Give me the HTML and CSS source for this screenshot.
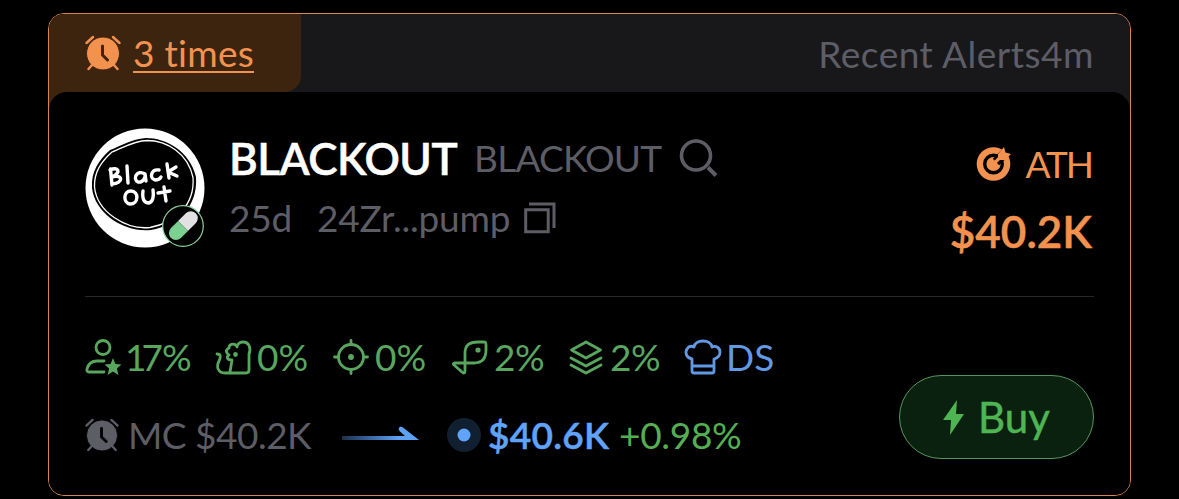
FILE: index.html
```html
<!DOCTYPE html>
<html lang="en">
<head>
<meta charset="utf-8">
<title>BLACKOUT alert</title>
<link rel="stylesheet" href="styles.css">
</head>
<body>
<svg class="defs" width="0" height="0">
  <symbol id="clock" viewBox="0 0 36 36">
    <circle cx="18" cy="18.500" r="16.500" fill="currentColor"/>
    <path d="M1.500 8 8 2M28 2l6.500 6M7 30l-3.500 4M29 30l3.500 4" fill="none" stroke="currentColor" stroke-width="2.400" stroke-linecap="round"/>
    <path class="hands" d="M17.500 11v9l5 5" fill="none" stroke-width="3" stroke-linecap="round" stroke-linejoin="round"/>
  </symbol>
</svg>
<main class="card">
  <header class="head">
    <div class="tab"><svg class="clock clock-alert"><use href="#clock"/></svg><span class="times">3 times</span></div>
    <span class="recent">Recent Alerts4m</span>
  </header>
  <div class="backing"><section class="body">
    <div class="token">
      <div class="avatar">
        <svg width="120" height="120" viewBox="0 0 120 120">
          <circle cx="60" cy="60" r="59.500" fill="#fff"/>
          <path d="M25 22C36 18 46 11 61 10c20 0 44 13 50 39 2 30-18 48-45 53C40 105 10 86 7 60 6 43 14 32 25 22Z" fill="#000"/>
          <path d="M27 24C38 20 48 13 62 12.500c20 0 41 13 46 37 2 27-17 45-43 50C41 102 12 84 9.500 59 9 44 16 34 27 24Z" fill="none" stroke="#fff" stroke-width="1.300"/>
          <g fill="none" stroke="#fff" stroke-width="3.400" stroke-linecap="round" stroke-linejoin="round">
            <path d="M25.500 41 27 57M25 42c8-4 12 2 2 7 11-3 12 6 0 7M42 38l1 17M60 46c-8-5-13 5-7 8 5 1 8-5 7-8l1 7M74 42c-8-1-10 8-4 10 3 0 5-1 6-3M82 36l2 14M91 39l-8 5 9 4"/>
            <path d="M46 63c-8 0-8 12-1 13 9 0 9-13 1-13M58 63c-1 8 1 12 6 12 4-1 5-7 4-13M79 59l2 14M73 65l12-2"/>
          </g>
        </svg>
        <svg class="pill" width="42" height="42" viewBox="0 0 42 42">
          <circle cx="21" cy="21" r="20.300" fill="#000" stroke="#8ed49d" stroke-width="1.200"/>
          <g transform="rotate(45 21 21)"><path d="M14 21V10a7 7 0 0 1 14 0v11Z" fill="#e1e1e3"/><path d="M14 21v10a7 7 0 0 0 14 0V21Z" fill="#7bd092"/></g>
        </svg>
      </div>
      <div class="info">
        <div class="names"><h1 class="symbol">BLACKOUT</h1><span class="fullname">BLACKOUT</span>
          <svg class="search" width="40" height="40" viewBox="0 0 40 40"><circle cx="17" cy="17.500" r="14.500" fill="none" stroke="currentColor" stroke-width="3.600"/><path d="m29 29.500 8 8" stroke="currentColor" stroke-width="4"/></svg></div>
        <div class="meta"><span class="age">25d</span><span class="address">24Zr...pump</span>
          <svg class="copy" width="32" height="32" viewBox="0 0 32 32" fill="none" stroke="currentColor" stroke-width="3"><path d="M1.700 7.800h22.500v22H1.700ZM5 2h25v24"/></svg></div>
      </div>
      <div class="ath">
        <div class="ath-label"><svg width="36" height="36" viewBox="0 0 36 36"><circle cx="17.500" cy="18" r="16.800" fill="currentColor"/><circle cx="17.500" cy="18" r="8.800" fill="none" stroke="#000" stroke-width="3.400"/><path d="m20 16 15-15" stroke="#000" stroke-width="9"/><path d="m17 18.500 10-10" stroke="currentColor" stroke-width="3.200" stroke-linecap="round"/><path d="M22 8l6-7 1.500 5.500L35 8l-6 6h-7Z" fill="currentColor"/></svg><span>ATH</span></div>
        <strong class="ath-value">$40.2K</strong>
      </div>
    </div>
    <div class="lower">
      <div>
        <div class="stats">
          <div class="stat s1"><svg viewBox="0 0 36 36"><circle cx="18" cy="8.500" r="7"/><path d="M19 22h-7c-6 0-9 4-10 8-.5 2 .5 3 2 3h15"/><path d="m28 19 2.400 6 6.100.5-4.600 4 1.500 6.500-5.400-3.400-5.400 3.400 1.500-6.500-4.600-4 6.100-.5Z" fill="currentColor" stroke="none"/></svg><span><i class="one">1</i>7%</span></div>
          <div class="stat s2"><svg viewBox="0 0 36 36"><path d="M2 15c4 0 4 3 2 7-3 6-1 12 6 12h21c2 0 3-1 3-3V15c2-4 1-12-6-12-4 0-6 3-6 5-1-4-8-4-8 1-4 2-3 5 0 7-3 2-2 5 3 5l-2 12"/><circle cx="20.500" cy="15.500" r="1" fill="currentColor"/></svg><span>0%</span></div>
          <div class="stat s3"><svg viewBox="0 0 36 36"><circle cx="18" cy="18" r="12.500"/><circle cx="18" cy="18" r="2.900" fill="currentColor" stroke="none"/><path d="M18 1.500v4M18 30.500v4M1.500 18h4M30.500 18h4"/></svg><span>0%</span></div>
          <div class="stat s4"><svg viewBox="0 0 36 36"><path d="M13 24V14C13 6 18 3 26 3h6c2 0 2 1 2 3v5c0 9-4 13-12 13H3c-2 0-2 1-1 2l8 7c2 2 3 1 3-2Z"/><circle cx="26" cy="11" r="2.600" fill="currentColor" stroke="none"/></svg><span>2%</span></div>
          <div class="stat s5"><svg viewBox="0 0 36 36"><path d="M18 3 32.500 11 18 19 3.500 11ZM3 19l15 8 15-8M3 26l15 8 15-8"/></svg><span>2%</span></div>
          <div class="stat s6"><svg viewBox="0 0 36 36"><path d="M7 32V20C1 19 0 13 2 10c2-3 5-3 7-2 1-8 17-8 18 0 4-2 8 1 8 5 0 4-2 6-6 7v12q0 2-2 2H9q-2 0-2-2M7 27h22"/></svg><span>DS</span></div>
        </div>
        <div class="market">
          <svg class="clock clock-mc"><use href="#clock"/></svg><span class="mc">MC $40.2K</span>
          <svg class="arrow" width="78" height="16" viewBox="0 0 78 16"><defs><linearGradient id="fade"><stop offset="0" stop-color="#1b304c"/><stop offset=".75" stop-color="#5ea2f7"/></linearGradient></defs><path d="M1 9h63l-5-4.500c-3-3 0-6 3-4L78 13H1Z" fill="url(#fade)"/></svg>
          <svg class="dot" width="34" height="34" viewBox="0 0 34 34"><circle cx="17" cy="17" r="17" fill="#112031"/><circle cx="17" cy="17" r="6.500" fill="#60a3fa"/></svg>
          <strong class="now">$40.6K</strong><span class="change">+0.98%</span>
        </div>
      </div>
      <button class="buy"><svg width="21" height="35" viewBox="0 0 21 35"><path d="M14 0 0 20h8L7 35 21 14h-8Z" fill="currentColor"/></svg><span>Buy</span></button>
    </div>
  </section></div>
</main>
</body>
</html>
```

FILE: styles.css
```css
* { box-sizing: border-box; }
body { margin: 0; padding: 13px 48px 3px; background: #000; height: 499px; overflow: hidden; font: 37px/44px Lato, "Open Sans", sans-serif; white-space: nowrap; font-variant-ligatures: none; }
svg { display: block; flex: none; overflow: visible; }
.defs { position: absolute; }
.card { width: 1083px; height: 483px; border: 1px solid #d98550; border-radius: 16px; overflow: hidden; background: #000; }
.head { height: 78px; display: flex; justify-content: space-between; background: #18181a; }
.tab { width: 252px; background: #3c240f; border-radius: 0 0 16px 0; color: #f3924f; display: flex; align-items: center; padding-left: 36px; gap: 12px; }
.clock { width: 36px; height: 36px; }
.clock-alert { stroke: #3c240f; }
.times { border-bottom: 2px solid; line-height: 36px; padding-top: 2px; margin-top: -1px; letter-spacing: .3px; }
.recent { color: #5d5d66; padding: 18px 36px 0 0; letter-spacing: .5px; }
.backing { background: linear-gradient(90deg, #3c240f 40px, #18181a 40px) top / 100% 20px no-repeat; }
.body { height: 403px; background: #000; border-radius: 18px 18px 0 0; padding: 0 36px; }
.token { height: 205px; padding-top: 36px; display: flex; border-bottom: 1px solid #27272a; }
.avatar { width: 120px; height: 120px; position: relative; }
.pill { position: absolute; left: 77px; top: 77px; }
.info { margin-left: 24px; color: #5d5d66; }
.names { display: flex; height: 60px; align-items: center; }
.symbol { margin: 0; color: #fff; font-size: 44px; font-weight: 600; line-height: 60px; letter-spacing: -.5px; -webkit-text-stroke: .5px; }
.fullname { margin-left: 17px; letter-spacing: -.8px; }
.search { margin-left: 18px; }
.meta { display: flex; height: 60px; align-items: center; letter-spacing: -.2px; }
.address { margin-left: 25px; }
.copy { margin-left: 14px; }
.ath { margin-left: auto; color: #f3924f; display: flex; flex-direction: column; align-items: flex-end; padding-right: 2px; }
.ath-label { height: 72px; display: flex; align-items: center; gap: 13px; letter-spacing: -2px; }
.ath-value { font-size: 44px; font-weight: 600; line-height: 62px; -webkit-text-stroke: .5px; }
.lower { display: flex; justify-content: space-between; }
.stats { display: flex; padding-top: 38px; color: #59a65e; }
.stat { display: flex; align-items: center; gap: 6px; height: 44px; }
.stat svg { width: 36px; height: 36px; fill: none; stroke: currentColor; stroke-width: 2.8; stroke-linejoin: round; stroke-linecap: round; }
.s1 { width: 130px; } .s2 { width: 118px; } .s3 { width: 119px; } .s4 { width: 116px; } .s5 { width: 117px; }
.s1 span { letter-spacing: -1px; margin-left: -2px; }
.one { font-style: normal; letter-spacing: -5px; }
.s4 span, .s5 span { letter-spacing: -.5px; }
.s6 { color: #6299e4; gap: 5px; }
.market { display: flex; align-items: center; height: 44px; margin-top: 34px; }
.clock-mc { color: #5d5d66; stroke: #000; width: 34px; height: 34px; }
.mc { color: #5d5d66; margin-left: 9px; width: 213px; letter-spacing: -.5px; }
.dot { margin-left: 28px; }
.now { color: #60a3fa; font-weight: 600; margin-left: 7px; width: 131px; letter-spacing: .3px; -webkit-text-stroke: .5px; }
.change { color: #55ae51; letter-spacing: -.3px; }
.buy { width: 195px; height: 84px; margin: 78px 0 0; padding: 0; border: 1px solid #57965a; border-radius: 42px; background: #0a2110; color: #4fb452; font: 42px/50px Lato, sans-serif; -webkit-text-stroke: .5px; display: flex; align-items: center; justify-content: center; gap: 14px; }
```
